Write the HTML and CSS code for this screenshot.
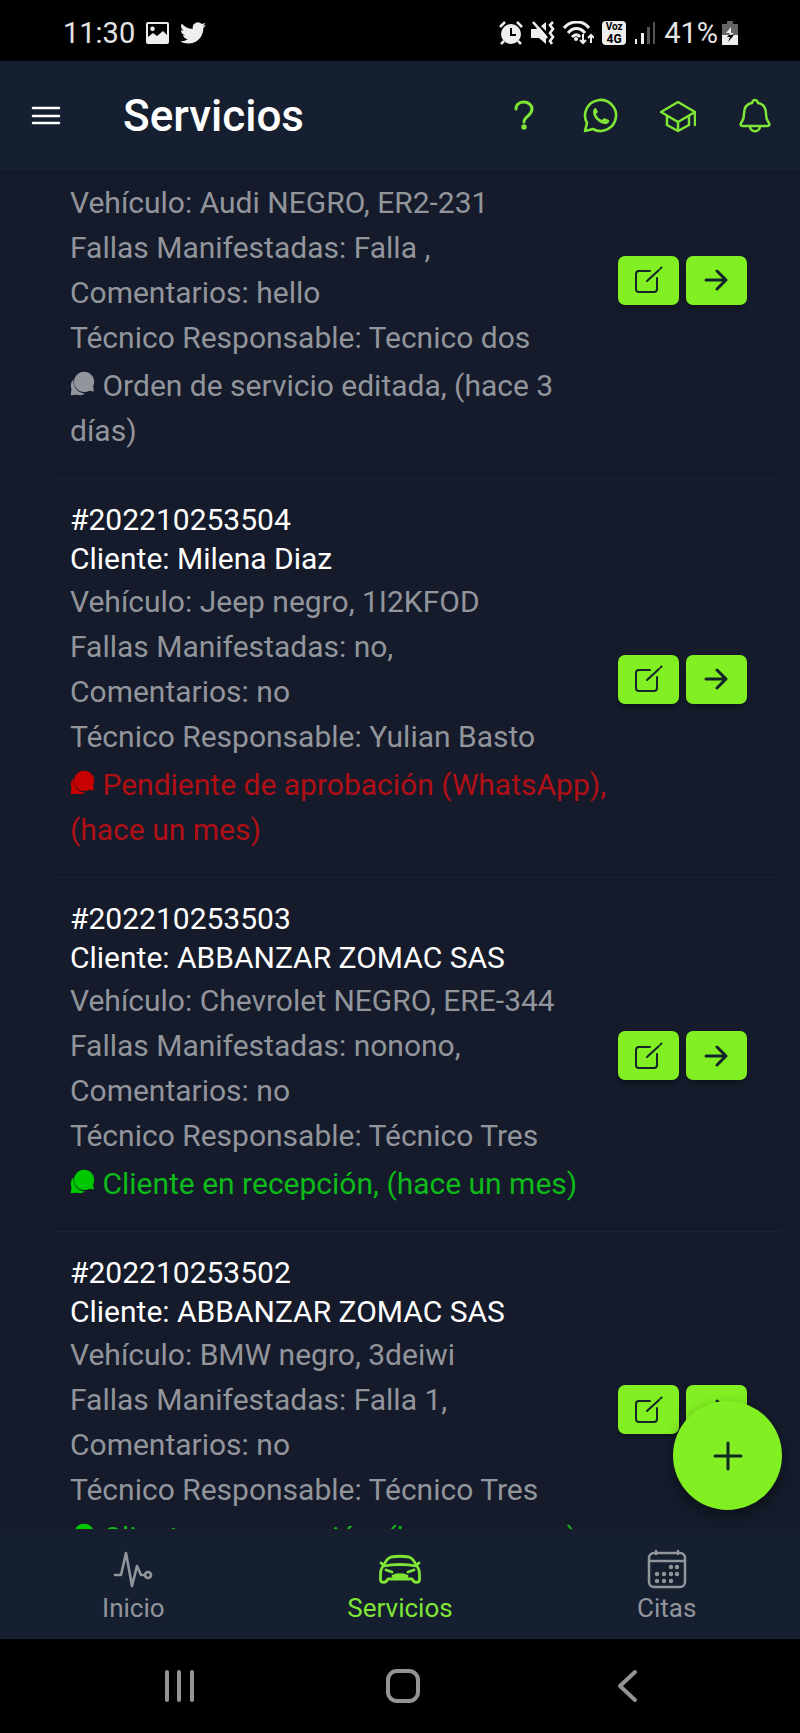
FILE: index.html
```html
<!DOCTYPE html>
<html lang="es">
<head>
    <meta charset="UTF-8">
    <meta name="viewport" content="width=device-width, initial-scale=1.0">
    <title>Servicios</title>
    <link rel="stylesheet" href="styles.css">
</head>
<body>
    <!-- shared icons -->
    <svg class="sprite" aria-hidden="true">
        <symbol id="icon-chat" viewBox="0 0 25 25">
            <path d="M3.200 8.500C.8 11 .2 14.500 1.500 18L.7 24.300l6-.5c3 .9 6 .4 8.300-1.600C9 22.500 3.500 18 3.200 8.500z"/>
            <path d="M14.200.7c5.600 0 10 4.500 10 10 0 1.700-.4 3.200-1.100 4.600l.8 5.200-4.500-.7a10 10 0 0 1-5.200 1.300C8.500 21 4 16.400 4 10.800S8.600.7 14.200.7z"/>
        </symbol>
        <symbol id="icon-edit" viewBox="0 0 28 28">
            <path d="M15 5H4a3 3 0 0 0-3 3v15a3 3 0 0 0 3 3h15a3 3 0 0 0 3-3V12" />
            <path d="M12 15L24 4M25.500 2.500L26.500 1.500"/>
        </symbol>
        <symbol id="icon-arrow" viewBox="0 0 28 28">
            <path d="M3 14h20M14 5l9 9-9 9"/>
        </symbol>
    </svg>

    <div class="status-bar">
        <div class="status-left">
            <span>11:30</span>
            <svg width="23" height="22" viewBox="0 0 23 22">
                <path fill="#eee" fill-rule="evenodd" d="M2 0h19a2 2 0 0 1 2 2v18a2 2 0 0 1-2 2H2a2 2 0 0 1-2-2V2a2 2 0 0 1 2-2zM2 2v13l5-4 4 3 6-5 4 4V2zM6.500 4.500a2.300 2.300 0 1 1 0 4.600 2.300 2.300 0 0 1 0-4.600z"/>
            </svg>
            <svg width="26" height="22" viewBox="0 2 24 20">
                <path fill="#eee" d="M23.950 4.570a10 10 0 0 1-2.820.770 4.960 4.960 0 0 0 2.160-2.720c-.95.550-2 .95-3.130 1.180a4.920 4.920 0 0 0-8.380 4.480C7.690 8.100 4.070 6.130 1.640 3.160a4.820 4.820 0 0 0-.67 2.480c0 1.710.87 3.210 2.190 4.100a4.900 4.900 0 0 1-2.230-.620v.060a4.920 4.920 0 0 0 3.950 4.830 5 5 0 0 1-2.210.080 4.940 4.940 0 0 0 4.600 3.420A9.870 9.870 0 0 1 0 19.540a13.990 13.990 0 0 0 7.550 2.210c9.050 0 14-7.500 14-13.990 0-.21 0-.42-.020-.63a9.940 9.940 0 0 0 2.460-2.550z"/>
            </svg>
        </div>
        <div class="status-right">
            <svg width="24" height="24" viewBox="0 0 24 24">
                <circle cx="12" cy="13" r="10" fill="#eee"/>
                <path fill="none" stroke="#eee" stroke-width="2.500" d="M1 6l5-5M23 6l-5-5M5 20l-3 3M19 20l3 3"/>
                <path fill="none" stroke="#000" stroke-width="2" d="M12 7v7h5"/>
            </svg>
            <svg width="24" height="24" viewBox="0 0 24 24">
                <path fill="#eee" d="M0 8h5l3-2 7 8v9l-7-6H0zM10 5l5-4v9z"/>
                <path fill="none" stroke="#eee" stroke-width="2.600" d="M2 1l14 16M22 1l-3 3 3 4-3 4 3 4-3 4 2 3"/>
            </svg>
            <svg width="31" height="24" viewBox="0 0 31 24">
                <path fill="none" stroke="#eee" stroke-width="3" d="M1 7c7-8 19-8 25 0M5 12c5-6 12-6 17 0M9 16c3-3 6-3 8 0"/>
                <circle cx="13" cy="18" r="2" fill="#eee"/>
                <path fill="none" stroke="#eee" stroke-width="2" d="M20 13v9M17 19l3 3 3-3M28 22v-8M25 17l3-3 3 3"/>
            </svg>
            <span class="volte"><b>Voz</b><b>4G</b></span>
            <svg width="22" height="24" viewBox="0 0 22 24">
                <path fill="#eee" d="M1 18h2v5H1zM7 12h3v11H7z"/>
                <path fill="#555" d="M13 6h3v17h-3zM19 1h2v22h-2z"/>
            </svg>
            <span class="battery-level">41%</span>
            <svg width="16" height="24" viewBox="0 0 16 24">
                <path fill="#666" d="M5 0h6v3h5v11H0V3h5z"/>
                <path fill="#eee" d="M0 14h16v10H0z"/>
                <path fill="#eee" d="M9 6v6h3l-5 3 1-3H4z"/>
                <path fill="#000" d="M7 14h5l-6 7 2-5H5z"/>
            </svg>
        </div>
    </div>

    <header class="header">
        <button class="icon-btn menu-btn" aria-label="Menú">
            <svg width="30" height="20" viewBox="0 0 30 20" stroke-width="2.500"><path d="M2 2h26M2 10h26M2 17h26"/></svg>
        </button>
        <h1>Servicios</h1>
        <button class="icon-btn" aria-label="Ayuda">
            <svg width="36" height="36" viewBox="0 0 36 36" stroke-width="3">
                <path d="M10 11c0-5 4-7 8-7s8 3 8 7c0 7-8 7-8 13"/>
                <circle cx="18" cy="29" r="2.700" class="solid"/>
            </svg>
        </button>
        <button class="icon-btn" aria-label="WhatsApp">
            <svg width="36" height="36" viewBox="0 0 36 36" stroke-width="2.600">
                <path d="M2 33l2-8A15.500 15.500 0 1 1 10 31z"/>
                <path class="solid" d="M13 10c-2 0-3 2-3 4 0 6 7 12 12 12 3 0 5-2 4-4l-5-2-2 2c-3-1-5-3-6-6l2-2z"/>
            </svg>
        </button>
        <button class="icon-btn" aria-label="Academia">
            <svg width="36" height="36" viewBox="0 0 36 36" stroke-width="2.500">
                <path d="M1 14L18 4l17 10-17 10zM7 18v9l11 6 11-6v-9M18 24v9M35 14v13"/>
            </svg>
        </button>
        <button class="icon-btn" aria-label="Notificaciones">
            <svg width="36" height="36" viewBox="0 0 36 36" stroke-width="2.500">
                <path d="M18 2c2 0 2.500 1 3 3 6 1 8 6 8 11 0 6 2 7 3 9 1 2 0 3-2 3H6c-2 0-3-1-2-3 1-2 3-3 3-9 0-5 2-10 8-11 .5-2 1-3 3-3zM13 28c0 7 10 7 10 0"/>
            </svg>
        </button>
    </header>

    <main class="content">
        <div class="services">
            <article class="service service-scrolled">
                <div class="service-info">
                    <p>Vehículo: Audi NEGRO, ER2-231</p>
                    <p>Fallas Manifestadas: Falla ,</p>
                    <p>Comentarios: hello</p>
                    <p>Técnico Responsable: Tecnico dos</p>
                    <p class="state"><svg class="chat"><use href="#icon-chat"/></svg> Orden de servicio editada, (hace 3 días)</p>
                </div>
                <div class="actions">
                    <button class="action-btn" aria-label="Editar"><svg class="edit"><use href="#icon-edit"/></svg></button>
                    <button class="action-btn" aria-label="Ver"><svg class="arrow"><use href="#icon-arrow"/></svg></button>
                </div>
            </article>

            <article class="service">
                <div class="service-info">
                    <h2>#202210253504<br>Cliente: Milena Diaz</h2>
                    <p>Vehículo: Jeep negro, 1I2KFOD</p>
                    <p>Fallas Manifestadas: no,</p>
                    <p>Comentarios: no</p>
                    <p>Técnico Responsable: Yulian Basto</p>
                    <p class="state state-pending"><svg class="chat"><use href="#icon-chat"/></svg> Pendiente de aprobación (WhatsApp), (hace un mes)</p>
                </div>
                <div class="actions">
                    <button class="action-btn" aria-label="Editar"><svg class="edit"><use href="#icon-edit"/></svg></button>
                    <button class="action-btn" aria-label="Ver"><svg class="arrow"><use href="#icon-arrow"/></svg></button>
                </div>
            </article>

            <article class="service">
                <div class="service-info">
                    <h2>#202210253503<br>Cliente: ABBANZAR ZOMAC SAS</h2>
                    <p>Vehículo: Chevrolet NEGRO, ERE-344</p>
                    <p>Fallas Manifestadas: nonono,</p>
                    <p>Comentarios: no</p>
                    <p>Técnico Responsable: Técnico Tres</p>
                    <p class="state state-ok"><svg class="chat"><use href="#icon-chat"/></svg> Cliente en recepción, (hace un mes)</p>
                </div>
                <div class="actions">
                    <button class="action-btn" aria-label="Editar"><svg class="edit"><use href="#icon-edit"/></svg></button>
                    <button class="action-btn" aria-label="Ver"><svg class="arrow"><use href="#icon-arrow"/></svg></button>
                </div>
            </article>

            <article class="service">
                <div class="service-info">
                    <h2>#202210253502<br>Cliente: ABBANZAR ZOMAC SAS</h2>
                    <p>Vehículo: BMW negro, 3deiwi</p>
                    <p>Fallas Manifestadas: Falla 1,</p>
                    <p>Comentarios: no</p>
                    <p>Técnico Responsable: Técnico Tres</p>
                    <p class="state state-ok"><svg class="chat"><use href="#icon-chat"/></svg> Cliente en recepción, (hace un mes)</p>
                </div>
                <div class="actions">
                    <button class="action-btn" aria-label="Editar"><svg class="edit"><use href="#icon-edit"/></svg></button>
                    <button class="action-btn" aria-label="Ver"><svg class="arrow"><use href="#icon-arrow"/></svg></button>
                </div>
            </article>
        </div>
        <button class="fab" aria-label="Nuevo servicio">
            <svg width="32" height="32" viewBox="0 0 32 32" stroke-width="3"><path d="M16 3v26M3 16h26"/></svg>
        </button>
    </main>

    <nav class="tabs">
        <a href="#inicio">
            <svg width="40" height="40" viewBox="0 0 40 40" stroke-width="2.600">
                <path d="M2 26h6L13 4l6 33 5-20 4 9h4"/>
                <circle cx="35" cy="26" r="3"/>
            </svg>
            Inicio
        </a>
        <a href="#servicios" class="active">
            <svg width="42" height="40" viewBox="0 0 42 40" stroke-width="2.800">
                <path d="M5 16c2-5 4-7 7-8 6-1 12-1 18 0 3 1 5 3 7 8M5 16c-3 3-3.500 6-3.500 10v5c0 3 6 3 6.500 0l1-1h24l1 1c.5 3 6.500 3 6.500 0v-5c0-4-.5-7-3.500-10M2 14l3 2M40 14l-3 2M5 17c9-2 23-2 32 0M7 21l6 2M35 21l-6 2M14 27c4-1.500 10-1.500 14 0z"/>
            </svg>
            Servicios
        </a>
        <a href="#citas">
            <svg width="40" height="40" viewBox="0 0 40 40" stroke-width="2.500">
                <rect x="2" y="4" width="36" height="34" rx="5"/>
                <path d="M2 12h36M9 2v3M31 2v3"/>
                <path stroke-width="4.400" d="M24 18h0M30 18h0M10 25h0M17 25h0M24 25h0M30 25h0M10 32h0M17 32h0M24 32h0"/>
            </svg>
            Citas
        </a>
    </nav>

    <div class="system-nav">
        <button aria-label="Recientes"><svg width="34" height="34" viewBox="0 0 34 34" stroke-width="4"><path d="M5 3v28M17 3v28M30 3v28"/></svg></button>
        <button aria-label="Inicio del sistema"><svg width="36" height="36" viewBox="0 0 36 36" stroke-width="4"><rect x="3" y="3" width="30" height="30" rx="9"/></svg></button>
        <button aria-label="Atrás"><svg width="34" height="34" viewBox="0 0 34 34" stroke-width="4"><path d="M25 3L10 17l15 14"/></svg></button>
    </div>
</body>
</html>
```
FILE: styles.css
```css
* {
    box-sizing: border-box;
}
body {
    font-family: Roboto, sans-serif;
    font-size: 30px;
    background-color: #151b2b;
    color: #92959b;
    display: flex;
    flex-direction: column;
    height: 100vh;
    margin: 0;
}
h1, h2, p {
    margin: 0;
    font-weight: 400;
}
button {
    border: none;
    background: none;
    padding: 0;
    cursor: pointer;
    display: flex;
    align-items: center;
    justify-content: center;
}
svg {
    flex-shrink: 0;
}
.sprite {
    display: none;
}

/* status bar */
.status-bar {
    background-color: #000;
    color: #e4e4e4;
    font-size: 29px;
    height: 61px;
    padding: 4px 62px 0 63px;
    display: flex;
    align-items: center;
    justify-content: space-between;
}
.status-left, .status-right {
    display: flex;
    align-items: center;
    gap: 11px;
}
.status-right {
    gap: 8px;
}
.battery-level {
    margin-right: -4px;
}
.volte {
    background-color: #eee;
    color: #000;
    border-radius: 4px;
    width: 24px;
    height: 24px;
    display: flex;
    flex-direction: column;
    align-items: center;
    justify-content: center;
    font-size: 10px;
    line-height: 12px;
}
.volte b + b {
    font-size: 12px;
}

/* header */
.header {
    background-color: #151f30;
    height: 109px;
    padding: 0 27px 0 31px;
    display: flex;
    align-items: center;
    gap: 41px;
    box-shadow: 0 2px 5px rgba(0,20,20,0.4);
    z-index: 1;
}
.header h1 {
    flex: 1;
    color: #fff;
    font-size: 44px;
    font-weight: 500;
    margin-left: 21px;
}
.icon-btn svg, .fab svg, .tabs svg, .system-nav svg {
    fill: none;
    stroke: currentColor;
    stroke-linecap: round;
    stroke-linejoin: round;
}
.icon-btn {
    color: #7fe636;
}
.menu-btn {
    color: #fff;
}
.icon-btn .solid {
    fill: currentColor;
    stroke: none;
}

/* services list */
.content {
    flex: 1;
    min-height: 0;
    overflow: hidden;
    position: relative;
}
.services {
    margin-top: -90px;
    padding: 0 18px 0 52px;
}
.service {
    display: flex;
    align-items: center;
    padding: 21px 35px 25px 18px;
    border-bottom: 1px solid #1b242c;
}
.service-scrolled {
    min-height: 399px;
}
.service-scrolled .service-info {
    align-self: flex-end;
}
.service-info {
    flex: 1;
    line-height: 45px;
}
.service h2 {
    color: #fff;
    font-size: 30px;
    line-height: 39px;
    margin-bottom: 1px;
}
.state {
    margin-top: 3px;
}
.state-pending {
    color: #b01015;
}
.state-ok {
    color: #0eb91a;
}
.chat {
    width: 25px;
    height: 25px;
    fill: currentColor;
}
.state-pending .chat {
    fill: #c80000;
}
.state-ok .chat {
    fill: #00c800;
}
.actions {
    display: flex;
    gap: 7px;
    margin-top: 6px;
}
.action-btn {
    width: 61px;
    height: 49px;
    background-color: #82ef22;
    color: #12262a;
    border-radius: 7px;
    box-shadow: 0 3px 4px rgba(0,0,0,0.3);
}
.action-btn svg {
    width: 28px;
    height: 28px;
    fill: none;
    stroke: currentColor;
    stroke-width: 2;
    stroke-linecap: round;
    stroke-linejoin: round;
}
.action-btn .arrow {
    stroke-width: 3;
}
.fab {
    position: absolute;
    right: 18px;
    bottom: 19px;
    width: 109px;
    height: 109px;
    border-radius: 50%;
    background-color: #82ef22;
    color: #12262a;
    box-shadow: 0 6px 14px rgba(0,0,0,0.4);
}

/* bottom tabs */
.tabs {
    background-color: #151f30;
    border-top: 1px solid #22222d;
    height: 110px;
    display: flex;
}
.tabs a {
    flex: 1;
    display: flex;
    flex-direction: column;
    align-items: center;
    padding-top: 19px;
    gap: 4px;
    color: #92959b;
    font-size: 26px;
    line-height: 30px;
    text-decoration: none;
}
.tabs a.active {
    color: #7fe636;
}

/* android buttons */
.system-nav {
    background-color: #000;
    color: #949494;
    height: 94px;
    padding: 0 61px 0 67px;
    display: flex;
}
.system-nav button {
    flex: 1;
    color: inherit;
}
```
